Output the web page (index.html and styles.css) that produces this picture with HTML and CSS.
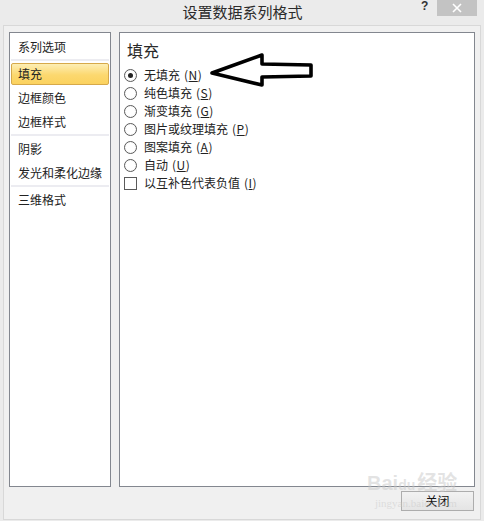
FILE: index.html
```html
<!DOCTYPE html>
<html lang="zh-CN">
<head>
<meta charset="utf-8">
<title>设置数据系列格式</title>
<link rel="stylesheet" href="styles.css">
</head>
<body>
<div class="titlebar">
  <div class="title">设置数据系列格式</div>
  <div class="controls">
    <span class="help">?</span>
    <span class="close">
      <svg width="10" height="10" viewBox="0 0 10 10"><path d="M1 1L9 9M9 1L1 9" stroke="#fff" stroke-width="1.6"/></svg>
    </span>
  </div>
</div>
<div class="frame">
  <div class="panels">
    <div class="list">
      <div class="item">系列选项</div>
      <div class="sep"></div>
      <div class="item selected">填充</div>
      <div class="item">边框颜色</div>
      <div class="item">边框样式</div>
      <div class="sep"></div>
      <div class="item">阴影</div>
      <div class="item">发光和柔化边缘</div>
      <div class="sep"></div>
      <div class="item">三维格式</div>
    </div>
    <div class="content">
      <div class="heading">填充</div>
      <div class="opt"><span class="radio checked"></span><span>无填充</span><span class="key">(<u>N</u>)</span></div>
      <div class="opt"><span class="radio"></span><span>纯色填充</span><span class="key">(<u>S</u>)</span></div>
      <div class="opt"><span class="radio"></span><span>渐变填充</span><span class="key">(<u>G</u>)</span></div>
      <div class="opt"><span class="radio"></span><span>图片或纹理填充</span><span class="key">(<u>P</u>)</span></div>
      <div class="opt"><span class="radio"></span><span>图案填充</span><span class="key">(<u>A</u>)</span></div>
      <div class="opt"><span class="radio"></span><span>自动</span><span class="key">(<u>U</u>)</span></div>
      <div class="opt"><span class="check"></span><span>以互补色代表负值</span><span class="key">(<u>I</u>)</span></div>
      <svg class="arrow" width="110" height="40" viewBox="0 0 110 40">
        <polygon points="4,22 54,4 54,13 103,14 103,25 54,26 54,34" fill="#fff" stroke="#000" stroke-width="3.6" stroke-linejoin="round"/>
      </svg>
    </div>
  </div>
  <div class="footer">
    <div class="btn">关闭</div>
  </div>
  <div class="watermark">
    <div class="wm-big">Bai<span class="wm-paw">du</span>经验</div>
    <div class="wm-small">jingyan.baidu.com</div>
  </div>
</div>
</body>
</html>
```
FILE: styles.css
```css
html, body {
  margin: 0;
  padding: 0;
}
body {
  width: 484px;
  height: 521px;
  overflow: hidden;
  background: #ebebeb;
  font-family: "Noto Sans CJK SC", "Noto Sans", sans-serif;
  color: #222;
}
.titlebar {
  height: 25px;
  display: grid;
  grid-template-columns: 1fr auto 1fr;
  align-items: start;
}
.title {
  grid-column: 2;
  font-size: 15px;
  line-height: 23px;
  color: #2b2b2b;
  padding-left: 1px;
}
.controls {
  grid-column: 3;
  justify-self: end;
  display: flex;
  align-items: flex-start;
  margin-right: 7px;
}
.help {
  font-family: "Liberation Sans", sans-serif;
  font-weight: bold;
  font-size: 12px;
  line-height: 13px;
  color: #333;
  width: 12px;
  margin-right: 4px;
}
.close {
  width: 40px;
  height: 16px;
  background: #c3c3c3;
  display: flex;
  align-items: center;
  justify-content: center;
}
.frame {
  position: relative;
  margin: 0 3px;
  height: 495px;
  box-sizing: border-box;
  border: 1px solid #d8d8d8;
  background: #f0f0f0;
  padding: 6px 5px 8px 5px;
  display: flex;
  flex-direction: column;
}
.panels {
  display: flex;
  gap: 8px;
  height: 455px;
}
.list {
  width: 102px;
  box-sizing: border-box;
  border: 1px solid #83878f;
  background: #fff;
  padding-top: 2px;
  font-size: 12px;
}
.item {
  height: 24px;
  line-height: 24px;
  padding-left: 8px;
  color: #222;
}
.item.selected {
  margin: 1px 1px;
  height: 22px;
  line-height: 20px;
  padding-left: 6px;
  border: 1px solid #d6a94a;
  border-radius: 2px;
  background: linear-gradient(#fdeeb4, #fcd86f 55%, #fbd25f);
  box-sizing: border-box;
}
.sep {
  height: 3px;
  box-sizing: border-box;
  border-top: 2px solid #ececf1;
  margin: 0 1px;
}
.content {
  position: relative;
  flex: 1;
  box-sizing: border-box;
  border: 1px solid #83878f;
  background: #fff;
  padding: 5px 0 0 4px;
  font-size: 12px;
}
.heading {
  font-size: 16px;
  line-height: 24px;
  padding-left: 3px;
  color: #2a2a2a;
  margin-bottom: 4px;
}
.opt {
  display: flex;
  align-items: center;
  height: 18px;
  line-height: 18px;
  color: #222;
}
.radio {
  width: 13px;
  height: 13px;
  box-sizing: border-box;
  border: 1px solid #5a5a5a;
  border-radius: 50%;
  background: radial-gradient(circle, #fff 50%, #ececec);
  margin-right: 7px;
  display: flex;
  align-items: center;
  justify-content: center;
}
.radio.checked::after {
  content: "";
  width: 5px;
  height: 5px;
  border-radius: 50%;
  background: #222;
}
.check {
  width: 13px;
  height: 13px;
  box-sizing: border-box;
  border: 1px solid #5a5a5a;
  background: #fff;
  margin-right: 7px;
}
.key {
  margin-left: 4px;
  font-size: 12px;
  letter-spacing: 0.5px;
}
.arrow {
  position: absolute;
  left: 88px;
  top: 18px;
}
.footer {
  display: flex;
  justify-content: flex-end;
  margin-top: 4px;
  padding-right: 1px;
}
.btn {
  width: 73px;
  height: 20px;
  box-sizing: border-box;
  border: 1px solid #adadad;
  background: linear-gradient(#f2f2f2, #e4e4e4);
  font-size: 12px;
  line-height: 18px;
  text-align: center;
  color: #111;
}
.watermark {
  position: absolute;
  left: 363px;
  top: 446px;
  color: rgba(200, 200, 200, 0.5);
  pointer-events: none;
  font-family: "Liberation Sans", "Noto Sans CJK SC", sans-serif;
}
.wm-big {
  font-size: 20px;
  font-weight: bold;
  line-height: 22px;
}
.wm-paw {
  font-size: 14px;
  margin-right: 2px;
}
.wm-small {
  font-family: "Liberation Serif", serif;
  font-size: 11px;
  line-height: 14px;
  margin-left: 8px;
}
```
